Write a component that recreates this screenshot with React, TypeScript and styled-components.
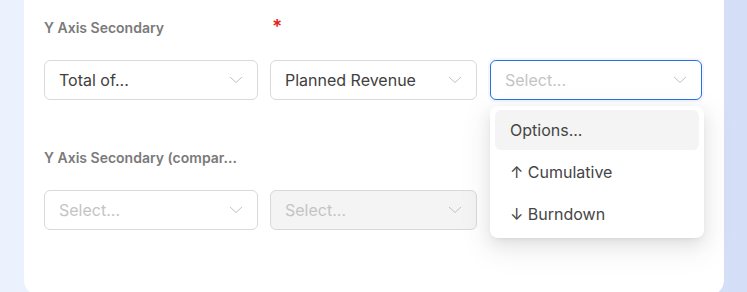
import styled, { createGlobalStyle } from "styled-components";

const GlobalStyle = createGlobalStyle`
  html, body {
    margin: 0;
    padding: 0;
  }
  body {
    font-family: Inter, "Noto Sans", sans-serif;
    overflow: hidden;
  }
`;

const Page = styled.div`
  width: 747px;
  height: 292px;
  overflow: hidden;
  padding: 0 23px 0 24px;
  box-sizing: border-box;
  background: linear-gradient(90deg, #ebf2fe 0%, #e2e9fb 50%, #d4def6 100%);
`;

const Card = styled.div`
  position: relative;
  background: #ffffff;
  height: 296px;
  border-radius: 0 0 16px 16px;
  padding: 19px 20px 0 20px;
  box-sizing: border-box;
`;

const Section = styled.div<{ gapTop?: number }>`
  margin-top: ${(p) => p.gapTop ?? 0}px;
`;

const Columns = styled.div`
  display: grid;
  grid-template-columns: 214px 207px 213px;
  column-gap: 12px;
  & > :nth-child(3) {
    margin-left: 1px;
  }
`;

const LabelRow = styled(Columns)`
  height: 18px;
  margin-bottom: 23px;
`;

const Label = styled.div`
  font-size: 14px;
  line-height: 18px;
  font-weight: 600;
  color: #7a7a7a;
  white-space: nowrap;
`;

const Required = styled.span`
  color: #e3201b;
  font-size: 19px;
  font-weight: 600;
  line-height: 12px;
  margin-left: 2px;
  position: relative;
  top: 0;
`;

const SelectBox = styled.div<{ focused?: boolean; disabled?: boolean }>`
  height: 40px;
  box-sizing: border-box;
  border: 1px solid ${(p) => (p.focused ? "#2a70e4" : "#d9d9d9")};
  border-radius: 6px;
  background: ${(p) => (p.disabled ? "#f4f4f4" : "#ffffff")};
  box-shadow: ${(p) => (p.focused ? "0 0 0 2px rgba(42, 112, 228, 0.06)" : "none")};
  display: flex;
  align-items: center;
  justify-content: space-between;
  padding: 0 14px 0 14px;
`;

const SelectText = styled.span<{ placeholder?: boolean }>`
  font-size: 16px;
  color: ${(p) => (p.placeholder ? "#c4c4c4" : "#404040")};
  white-space: nowrap;
`;

const Chevron = () => (
  <svg width="14" height="8" viewBox="0 0 14 8" fill="none">
    <path d="M1 1l6 5.5L13 1" stroke="#c0c0c0" strokeWidth="1" />
  </svg>
);

const Menu = styled.div`
  position: absolute;
  left: 466px;
  top: 106px;
  width: 214px;
  box-sizing: border-box;
  padding: 4px 5px;
  background: #ffffff;
  border-radius: 8px;
  box-shadow: 0 6px 16px rgba(0, 0, 0, 0.08), 0 3px 6px -4px rgba(0, 0, 0, 0.12),
    0 9px 28px 8px rgba(0, 0, 0, 0.05);
  display: flex;
  flex-direction: column;
  gap: 2px;
`;

const MenuItem = styled.div<{ active?: boolean }>`
  height: 40px;
  display: flex;
  align-items: center;
  padding: 0 15px;
  border-radius: 6px;
  background: ${(p) => (p.active ? "#f4f4f4" : "transparent")};
  font-size: 16px;
  color: #454545;
`;

type SelectProps = {
  value?: string;
  focused?: boolean;
  disabled?: boolean;
};

const Select = ({ value, focused, disabled }: SelectProps) => (
  <SelectBox focused={focused} disabled={disabled}>
    <SelectText placeholder={!value}>{value ?? "Select..."}</SelectText>
    <Chevron />
  </SelectBox>
);

export default function App() {
  return (
    <>
      <GlobalStyle />
      <Page>
        <Card>
          <Section>
            <LabelRow>
              <Label>Y Axis Secondary</Label>
              <Label>
                <Required>*</Required>
              </Label>
            </LabelRow>
            <Columns>
              <Select value="Total of..." />
              <Select value="Planned Revenue" />
              <Select focused />
            </Columns>
          </Section>
          <Section gapTop={49}>
            <LabelRow>
              <Label>Y Axis Secondary (compar...</Label>
            </LabelRow>
            <Columns>
              <Select />
              <Select disabled />
            </Columns>
          </Section>
          <Menu>
            <MenuItem active>Options...</MenuItem>
            <MenuItem>↑ Cumulative</MenuItem>
            <MenuItem>↓ Burndown</MenuItem>
          </Menu>
        </Card>
      </Page>
    </>
  );
}
